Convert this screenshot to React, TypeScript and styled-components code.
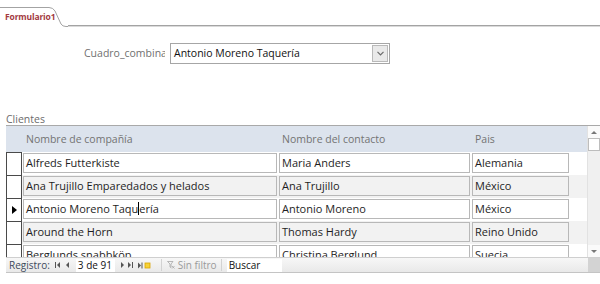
import styled, { createGlobalStyle } from "styled-components";

const GlobalStyle = createGlobalStyle`
  html, body {
    margin: 0;
    padding: 0;
    background: #ffffff;
  }
  body {
    font-family: "Open Sans", "Noto Sans", sans-serif;
  }
`;

const Page = styled.div`
  width: 600px;
  height: 284px;
  overflow: hidden;
  display: flex;
  flex-direction: column;
`;

const TabStrip = styled.div`
  height: 27px;
  display: flex;
  align-items: flex-end;
`;

const Tab = styled.div`
  position: relative;
  width: 68px;
  height: 20px;
  flex-shrink: 0;
  font-size: 8.5px;
  font-weight: 700;
  letter-spacing: -0.15px;
  color: #a33a3f;
  padding-left: 5px;
  padding-top: 2px;
  box-sizing: border-box;
  line-height: 16px;
  white-space: nowrap;

  svg {
    position: absolute;
    left: 0;
    top: 0;
  }
`;

const TabLine = styled.div`
  flex: 1;
  height: 2px;
  border-top: 1px solid #a3a3a3;
  background: #dadada;
  box-sizing: border-box;
`;

const FormHeader = styled.div`
  height: 85px;
  padding-top: 16px;
  box-sizing: border-box;
  display: flex;
  align-items: flex-start;
`;

const ComboLabel = styled.div`
  margin-left: 84px;
  width: 81px;
  height: 21px;
  overflow: hidden;
  white-space: nowrap;
  text-overflow: clip;
  font-size: 10.5px;
  line-height: 20px;
  color: #707070;
`;

const Combo = styled.div`
  margin-left: 5px;
  width: 218px;
  height: 19px;
  border: 1px solid #a6a6a6;
  display: flex;
  align-items: stretch;
  background: #fff;
`;

const ComboText = styled.div`
  flex: 1;
  font-size: 10.5px;
  line-height: 18px;
  padding-left: 3px;
  color: #111;
`;

const ComboButton = styled.div`
  width: 14px;
  margin: 1px;
  border: 1px solid #b9b9b9;
  background: #e9e9e9;
  display: flex;
  align-items: center;
  justify-content: center;
`;

const SectionLabel = styled.div`
  padding-left: 6px;
  padding-top: 1px;
  font-size: 10.5px;
  line-height: 12px;
  color: #6c6c6c;
`;

const Sheet = styled.div`
  margin-left: 6px;
  width: 594px;
  display: flex;
  flex-direction: column;
  border-top: 1px solid #a9a9a9;
`;

const SheetBody = styled.div`
  display: flex;
  height: 131px;
`;

const Grid = styled.div`
  flex: 1;
  display: flex;
  flex-direction: column;
  overflow: hidden;
`;

const HeaderRow = styled.div`
  height: 26px;
  flex-shrink: 0;
  background: #dce3ed;
  display: grid;
  grid-template-columns: 20px 256px 193px 1fr;
  align-items: center;
  font-size: 10.5px;
  color: #737373;
`;

const HeaderCell = styled.div`
  white-space: nowrap;
`;

const Row = styled.div<{ $alt: boolean }>`
  height: 23px;
  flex-shrink: 0;
  background: ${(p) => (p.$alt ? "#f2f2f2" : "#ffffff")};
  display: grid;
  grid-template-columns: 16px 256px 193px 97px;
  align-items: start;
`;

const Selector = styled.div`
  height: 23px;
  box-sizing: border-box;
  border-left: 1px solid #4a4a4a;
  border-right: 1px solid #4a4a4a;
  border-top: 1px solid #4a4a4a;
  background: #fff;
  display: flex;
  align-items: center;
  justify-content: center;
`;

const Field = styled.div<{ $alt: boolean; $w: number }>`
  margin-top: 1px;
  margin-left: 1px;
  width: ${(p) => p.$w}px;
  height: 20px;
  box-sizing: border-box;
  border: 1px solid #b8b8b8;
  background: ${(p) => (p.$alt ? "#f2f2f2" : "#ffffff")};
  font-size: 11px;
  line-height: 18px;
  padding-left: 2px;
  color: #1e1e1e;
  white-space: nowrap;
  overflow: hidden;
`;

const Caret = styled.span`
  display: inline-block;
  width: 1px;
  height: 13px;
  background: #000;
  vertical-align: -2px;
`;

const ScrollBar = styled.div`
  width: 12px;
  display: flex;
  flex-direction: column;
  background: #f0f0f0;
  border-left: 1px solid #e2e2e2;
`;

const ScrollBtn = styled.div`
  height: 12px;
  display: flex;
  align-items: center;
  justify-content: center;
  background: #fafafa;
`;

const Thumb = styled.div`
  height: 13px;
  border: 1px solid #bdbdbd;
  background: #fff;
  box-sizing: border-box;
`;

const Track = styled.div`
  flex: 1;
`;

const NavBar = styled.div`
  height: 14px;
  display: flex;
  border-top: 1px solid #cfcfcf;
  border-bottom: 1px solid #c4c4c4;
  overflow: hidden;
`;

const NavMain = styled.div`
  flex: 1;
  display: flex;
  align-items: center;
  background: linear-gradient(#f7f7f7, #e9e9e9);
  font-size: 10px;
  line-height: 13px;
  color: #3d4a5c;
  padding-left: 3px;
`;

const NavCorner = styled.div`
  width: 12px;
  background: #d3d3d3;
`;

const NavIcon = styled.span<{ $gap?: number }>`
  display: inline-flex;
  margin-left: ${(p) => p.$gap ?? 4}px;
`;

const NavBox = styled.div<{ $w: number; $gap: number }>`
  width: ${(p) => p.$w}px;
  margin-left: ${(p) => p.$gap}px;
  height: 13px;
  background: #fff;
  font-size: 10px;
  line-height: 13px;
  color: #111;
  padding-left: 2px;
  box-sizing: border-box;
  white-space: nowrap;
`;

const NavSep = styled.span<{ $l: number; $r: number }>`
  width: 1px;
  height: 12px;
  background: #d2d2d2;
  margin: 0 ${(p) => p.$r}px 0 ${(p) => p.$l}px;
`;

const NavMuted = styled.span`
  color: #9a9a9a;
  margin-left: 3px;
`;

const Tri = ({ dir, fill = "#555" }: { dir: "l" | "r" | "u" | "d"; fill?: string }) => {
  const pts = {
    l: "4,0 4,6 1,3",
    r: "1,0 1,6 4,3",
    u: "0,4 6,4 3,1",
    d: "0,1 6,1 3,4",
  }[dir];
  const vert = dir === "l" || dir === "r";
  return (
    <svg width={vert ? 5 : 6} height={vert ? 6 : 5} viewBox={vert ? "0 0 5 6" : "0 0 6 5"}>
      <polygon points={pts} fill={fill} />
    </svg>
  );
};

const rows = [
  { company: "Alfreds Futterkiste", contact: "Maria Anders", country: "Alemania" },
  { company: "Ana Trujillo Emparedados y helados", contact: "Ana Trujillo", country: "México" },
  { company: "Antonio Moreno Taquería", contact: "Antonio Moreno", country: "México" },
  { company: "Around the Horn", contact: "Thomas Hardy", country: "Reino Unido" },
  { company: "Berglunds snabbköp", contact: "Christina Berglund", country: "Suecia" },
];

export default function App() {
  return (
    <Page>
      <GlobalStyle />
      <TabStrip>
        <Tab>
          <svg width="68" height="20" viewBox="0 0 68 20">
            <path d="M0 0.5 H49 Q53 0.5 55 4 L61 17 Q62.5 19.5 66 19.5 H68" fill="none" stroke="#a3a3a3" />
          </svg>
          Formulario1
        </Tab>
        <TabLine />
      </TabStrip>

      <FormHeader>
        <ComboLabel>Cuadro_combinado</ComboLabel>
        <Combo>
          <ComboText>Antonio Moreno Taquería</ComboText>
          <ComboButton>
            <svg width="7" height="5" viewBox="0 0 7 5">
              <path d="M0.5 0.8 L3.5 3.8 L6.5 0.8" fill="none" stroke="#6a6a6a" strokeWidth="1.2" />
            </svg>
          </ComboButton>
        </Combo>
      </FormHeader>

      <SectionLabel>Clientes</SectionLabel>
      <Sheet>
        <SheetBody>
          <Grid>
            <HeaderRow>
              <span />
              <HeaderCell>Nombre de compañía</HeaderCell>
              <HeaderCell>Nombre del contacto</HeaderCell>
              <HeaderCell>Pais</HeaderCell>
            </HeaderRow>
            {rows.map((r, i) => {
              const alt = i % 2 === 1;
              return (
                <Row key={r.company} $alt={alt}>
                  <Selector>
                    {i === 2 && (
                      <svg width="5" height="8" viewBox="0 0 5 8">
                        <polygon points="0,0 5,4 0,8" fill="#000" />
                      </svg>
                    )}
                  </Selector>
                  <Field $alt={alt} $w={254}>
                    {i === 2 ? (
                      <>
                        Antonio Moreno Taqu<Caret />ería
                      </>
                    ) : (
                      r.company
                    )}
                  </Field>
                  <Field $alt={alt} $w={191}>
                    {r.contact}
                  </Field>
                  <Field $alt={alt} $w={97}>
                    {r.country}
                  </Field>
                </Row>
              );
            })}
          </Grid>
          <ScrollBar>
            <ScrollBtn>
              <Tri dir="u" fill="#777" />
            </ScrollBtn>
            <Thumb />
            <Track />
            <ScrollBtn>
              <Tri dir="d" fill="#777" />
            </ScrollBtn>
          </ScrollBar>
        </SheetBody>
        <NavBar>
          <NavMain>
            Registro:
            <NavIcon $gap={5}>
              <svg width="6" height="6" viewBox="0 0 6 6">
                <rect x="0" y="0" width="1" height="6" fill="#555" />
                <polygon points="5,0 5,6 2,3" fill="#555" />
              </svg>
            </NavIcon>
            <NavIcon $gap={4}>
              <Tri dir="l" />
            </NavIcon>
            <NavBox $w={39} $gap={6}>
              3 de 91
            </NavBox>
            <NavIcon $gap={5}>
              <Tri dir="r" />
            </NavIcon>
            <NavIcon $gap={3}>
              <svg width="6" height="6" viewBox="0 0 6 6">
                <polygon points="0,0 0,6 3,3" fill="#555" />
                <rect x="4" y="0" width="1" height="6" fill="#555" />
              </svg>
            </NavIcon>
            <NavIcon $gap={4}>
              <svg width="13" height="7" viewBox="0 0 13 7">
                <polygon points="0,0.5 0,6.5 3,3.5" fill="#555" />
                <rect x="3.5" y="0.5" width="1" height="6" fill="#555" />
                <rect x="7" y="1" width="5" height="5" fill="#f6d237" stroke="#d9a400" strokeWidth="0.8" />
              </svg>
            </NavIcon>
            <NavSep $l={10} $r={5} />
            <svg width="8" height="8" viewBox="0 0 8 8">
              <path d="M0.5 0.5 H6 L4 3 V6.5 L3 6 V3 Z" fill="none" stroke="#a7a7a7" strokeWidth="0.8" />
              <path d="M5 5 L7.5 7.5 M7.5 5 L5 7.5" stroke="#a7a7a7" strokeWidth="0.8" />
            </svg>
            <NavMuted>Sin filtro</NavMuted>
            <NavSep $l={4} $r={5} />
            <NavBox $w={55} $gap={0}>
              Buscar
            </NavBox>
          </NavMain>
          <NavCorner />
        </NavBar>
      </Sheet>
    </Page>
  );
}
